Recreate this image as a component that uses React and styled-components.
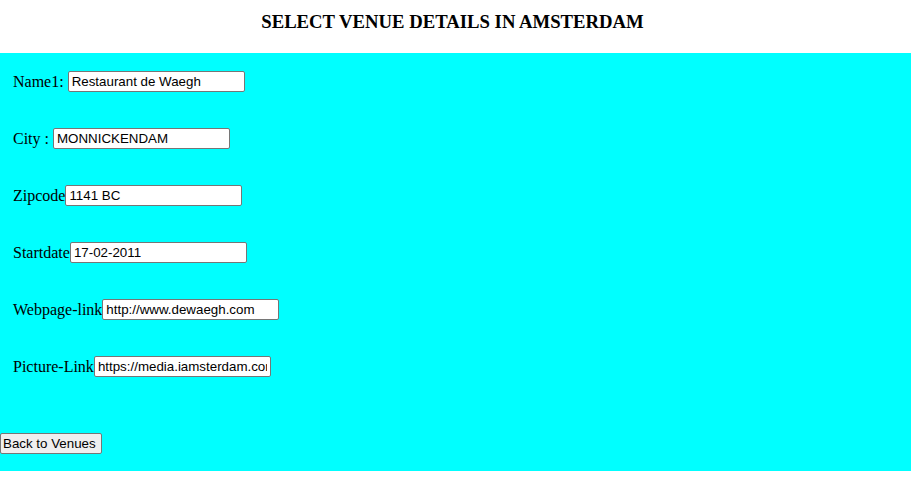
import React from "react";
import styled, { createGlobalStyle } from "styled-components";

const GlobalStyle = createGlobalStyle`
  body {
    margin: 0;
    background: #ffffff;
    font-family: "Liberation Serif", "Times New Roman", serif;
  }
`;

const Page = styled.div`
  width: 911px;
`;

const Title = styled.h3`
  margin: 0;
  height: 53px;
  display: flex;
  align-items: center;
  justify-content: center;
  font-size: 18.72px;
  font-weight: bold;
  color: #000;
  padding-bottom: 10px;
  padding-right: 6px;
  box-sizing: border-box;
`;

const Panel = styled.div`
  background: #00ffff;
  padding-bottom: 17px;
`;

const Row = styled.div`
  height: 57px;
  padding-left: 13px;
  display: flex;
  align-items: center;
  font-size: 16px;
  color: #000;
`;

const Label = styled.span`
  white-space: pre;
`;

const Field = styled.input`
  box-sizing: border-box;
  width: 177px;
  height: 21px;
  padding: 1px 3px;
  border: 1px solid #767676;
  border-radius: 2px;
  background: #fff;
  font-family: "Liberation Sans", Arial, sans-serif;
  font-size: 13.33px;
  color: #000;
  outline: none;
`;

const Footer = styled.div`
  padding-top: 38px;
`;

const BackButton = styled.button`
  box-sizing: border-box;
  height: 21px;
  padding: 1px 5px 1px 2px;
  margin: 0;
  border: 1px solid #767676;
  border-radius: 2px;
  background: #efefef;
  font-family: "Liberation Sans", Arial, sans-serif;
  font-size: 13.33px;
  color: #000;
  white-space: nowrap;
  display: block;
`;

const fields = [
  { label: "Name1: ", value: "Restaurant de Waegh" },
  { label: "City : ", value: "MONNICKENDAM" },
  { label: "Zipcode", value: "1141 BC" },
  { label: "Startdate", value: "17-02-2011" },
  { label: "Webpage-link", value: "http://www.dewaegh.com" },
  { label: "Picture-Link", value: "https://media.iamsterdam.com/ndtrc/Images/20110217/waegh.jpg" },
];

const App = () => {
  return (
    <Page>
      <GlobalStyle />
      <Title>SELECT VENUE DETAILS IN AMSTERDAM</Title>
      <Panel>
        {fields.map((f) => (
          <Row key={f.label}>
            <Label>{f.label}</Label>
            <Field type="text" defaultValue={f.value} />
          </Row>
        ))}
        <Footer>
          <BackButton>Back to Venues</BackButton>
        </Footer>
      </Panel>
    </Page>
  );
};

export default App;
